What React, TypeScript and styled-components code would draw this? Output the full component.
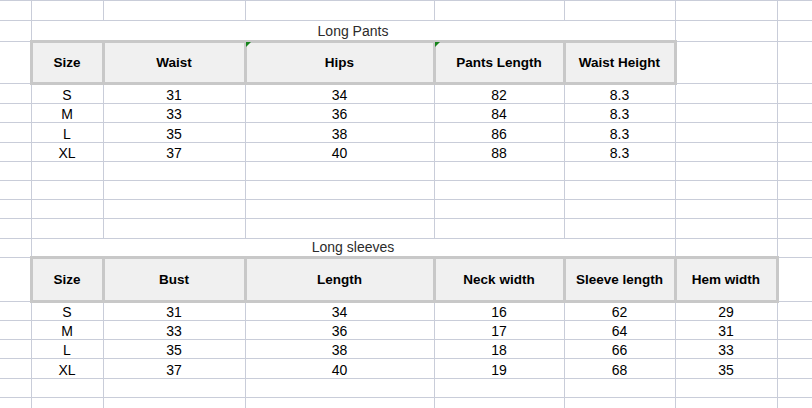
import React from 'react';
import styled, { createGlobalStyle } from 'styled-components';

const GRID = '#c9cdd9';
const HEAD_BORDER = '#c8c8c8';
const COLS = [31, 72, 142, 189, 130, 111, 102];

type SizeTable = {
    title: string;
    headers: string[];
    flagged: string[];
    rows: string[][];
};

const pants: SizeTable = {
    title: 'Long Pants',
    headers: ['Size', 'Waist', 'Hips', 'Pants Length', 'Waist Height'],
    flagged: ['Hips', 'Pants Length'],
    rows: [
        ['S', '31', '34', '82', '8.3'],
        ['M', '33', '36', '84', '8.3'],
        ['L', '35', '38', '86', '8.3'],
        ['XL', '37', '40', '88', '8.3'],
    ],
};

const sleeves: SizeTable = {
    title: 'Long sleeves',
    headers: ['Size', 'Bust', 'Length', 'Neck width', 'Sleeve length', 'Hem width'],
    flagged: [],
    rows: [
        ['S', '31', '34', '16', '62', '29'],
        ['M', '33', '36', '17', '64', '31'],
        ['L', '35', '38', '18', '66', '33'],
        ['XL', '37', '40', '19', '68', '35'],
    ],
};

const TOTAL_COLS = 8;

const fill = (from: number) =>
    Array.from({ length: TOTAL_COLS - from }).map((_, i) => <Cell key={`f${from + i}`} />);

const BlankRow: React.FC<{ h: number }> = ({ h }) => <Row $h={h}>{fill(0)}</Row>;

const TitleRow: React.FC<{ h: number; title: string }> = ({ h, title }) => (
    <Row $h={h}>
        <Cell />
        <TitleCell colSpan={5}>{title}</TitleCell>
        {fill(6)}
    </Row>
);

const HeaderRow: React.FC<{ h: number; table: SizeTable }> = ({ h, table }) => (
    <Row $h={h}>
        <Cell />
        {table.headers.map((label) => (
            <HeadCell key={label} $flag={table.flagged.includes(label)}>
                {label}
            </HeadCell>
        ))}
        {fill(1 + table.headers.length)}
    </Row>
);

const DataRow: React.FC<{ h: number; values: string[] }> = ({ h, values }) => (
    <Row $h={h}>
        <Cell />
        {values.map((v, i) => (
            <Cell key={i}>{v}</Cell>
        ))}
        {fill(1 + values.length)}
    </Row>
);

const App: React.FC = () => {
    const step = 19.2;
    return (
        <>
            <GlobalStyle />
            <Sheet>
                <colgroup>
                    {COLS.map((w, i) => (
                        <col key={i} style={{ width: w }} />
                    ))}
                    <col />
                </colgroup>
                <tbody>
                    <BlankRow h={20} />
                    <TitleRow h={20.5} title={pants.title} />
                    <HeaderRow h={42.3} table={pants} />
                    {pants.rows.map((r, i) => (
                        <DataRow key={r[0]} h={i === 0 ? 20.5 : step} values={r} />
                    ))}
                    {[0, 1, 2, 3].map((i) => (
                        <BlankRow key={`a${i}`} h={step} />
                    ))}
                    <TitleRow h={19.6} title={sleeves.title} />
                    <HeaderRow h={43.7} table={sleeves} />
                    {sleeves.rows.map((r) => (
                        <DataRow key={r[0]} h={step} values={r} />
                    ))}
                    {[0, 1].map((i) => (
                        <BlankRow key={`b${i}`} h={step} />
                    ))}
                </tbody>
            </Sheet>
        </>
    );
};

const GlobalStyle = createGlobalStyle`
    html, body {
        margin: 0;
        padding: 0;
        background: #ffffff;
    }
    body {
        font-family: 'Liberation Sans', Arial, sans-serif;
        overflow: hidden;
    }
`;

const Sheet = styled.table`
    width: 812px;
    table-layout: fixed;
    border-collapse: collapse;
    border-spacing: 0;
`;

const Row = styled.tr<{ $h: number }>`
    height: ${(p) => p.$h}px;
`;

const Cell = styled.td`
    padding: 0;
    border: 1px solid ${GRID};
    font-size: 14px;
    line-height: 16px;
    color: #000000;
    text-align: center;
    vertical-align: bottom;
    white-space: nowrap;
    overflow: hidden;
    &:first-child {
        border-left: none;
    }
    &:last-child {
        border-right: none;
    }
`;

const TitleCell = styled(Cell)`
    color: #2b2b2b;
    line-height: 17px;
`;

const HeadCell = styled.td<{ $flag?: boolean }>`
    position: relative;
    padding: 0;
    border: 3px solid ${HEAD_BORDER};
    background: #f0f0f0;
    font-size: 13.5px;
    font-weight: 700;
    color: #000000;
    text-align: center;
    vertical-align: middle;
    white-space: nowrap;
    &::before {
        content: '';
        display: ${(p) => (p.$flag ? 'block' : 'none')};
        position: absolute;
        top: -1px;
        left: -1px;
        width: 0;
        height: 0;
        border-top: 5px solid #16831c;
        border-right: 5px solid transparent;
    }
`;

export default App;
